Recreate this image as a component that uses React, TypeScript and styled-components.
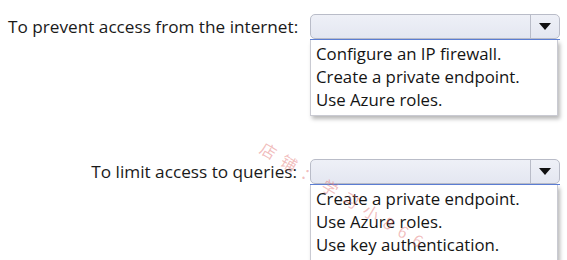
import React from "react";
import styled, { createGlobalStyle } from "styled-components";

const GlobalStyle = createGlobalStyle`
  html, body {
    margin: 0;
    padding: 0;
    background: #ffffff;
  }
  body {
    font-family: "Open Sans", "Noto Sans", sans-serif;
    color: #1a1a1a;
  }
`;

const Page = styled.div`
  position: relative;
  width: 567px;
  height: 260px;
  overflow: hidden;
  padding: 14px 0 0 8px;
  box-sizing: border-box;
  display: flex;
  flex-direction: column;
  gap: 43px;
`;

const Question = styled.div`
  display: grid;
  grid-template-columns: 289px 250px;
  column-gap: 13px;
  align-items: start;
`;

const Label = styled.div`
  font-size: 17.2px;
  line-height: 25px;
  text-align: right;
  white-space: nowrap;
  color: #1a1a1a;
`;

const Field = styled.div`
  display: flex;
  flex-direction: column;
`;

const Select = styled.div`
  height: 25px;
  box-sizing: border-box;
  display: flex;
  border: 1px solid #b9bcc8;
  border-radius: 5px;
  background: linear-gradient(#eef0f7, #e4e7f1);
`;

const SelectValue = styled.div`
  flex: 1;
`;

const ArrowButton = styled.div`
  width: 28px;
  display: flex;
  align-items: center;
  justify-content: center;
  border-left: 1px solid #b9bcc8;
`;

const Arrow = styled.div`
  width: 0;
  height: 0;
  border-left: 6px solid transparent;
  border-right: 6px solid transparent;
  border-top: 7px solid #111111;
`;

const Focus = styled.div`
  height: 1px;
  background: #5d7fd6;
`;

const List = styled.ul`
  list-style: none;
  margin: 0 2px 0 0;
  padding: 2px 0 4px 5px;
  background: #ffffff;
  border: 1px solid #c9cad2;
  border-top: none;
  box-shadow: 2px 3px 4px rgba(0, 0, 0, 0.28);
`;

const Option = styled.li`
  font-size: 16.8px;
  line-height: 23px;
  color: #141414;
  white-space: nowrap;
`;

const Watermark = styled.div`
  position: absolute;
  left: 262px;
  top: 134px;
  transform: rotate(31deg);
  transform-origin: left center;
  font-family: "Noto Sans CJK SC", sans-serif;
  font-size: 16px;
  letter-spacing: 8px;
  color: rgba(225, 110, 110, 0.45);
  white-space: nowrap;
  pointer-events: none;
`;

const questions = [
  {
    label: "To prevent access from the internet:",
    options: [
      "Configure an IP firewall.",
      "Create a private endpoint.",
      "Use Azure roles.",
    ],
  },
  {
    label: "To limit access to queries:",
    options: [
      "Create a private endpoint.",
      "Use Azure roles.",
      "Use key authentication.",
    ],
  },
];

const App = () => {
  return (
    <>
      <GlobalStyle />
      <Page>
        {questions.map((q) => (
          <Question key={q.label}>
            <Label>{q.label}</Label>
            <Field>
              <Select>
                <SelectValue />
                <ArrowButton>
                  <Arrow />
                </ArrowButton>
              </Select>
              <Focus />
              <List>
                {q.options.map((o) => (
                  <Option key={o}>{o}</Option>
                ))}
              </List>
            </Field>
          </Question>
        ))}
        <Watermark>店铺：学习小866</Watermark>
      </Page>
    </>
  );
};

export default App;
